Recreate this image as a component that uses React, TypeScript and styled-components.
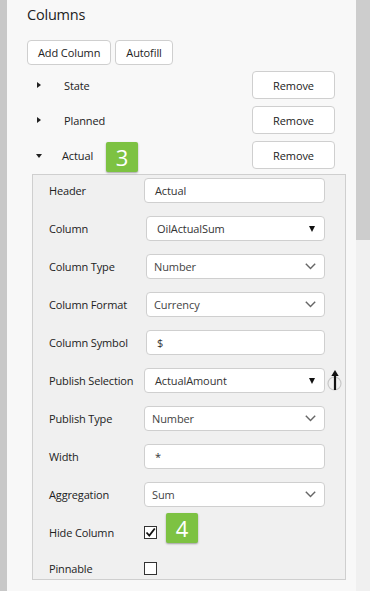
import React from "react";
import styled, { createGlobalStyle } from "styled-components";

const Global = createGlobalStyle`
  html, body { margin: 0; padding: 0; background: #f8f8f8; }
  * { box-sizing: border-box; }
  body { font-family: "Open Sans", "Noto Sans", sans-serif; color: #333; }
`;

const Page = styled.div`
  display: flex;
  width: 370px;
  height: 591px;
  overflow: hidden;
`;

const LeftStrip = styled.div`
  width: 7px;
  flex: none;
  background: #c8c8c8;
`;

const Main = styled.div`
  flex: 1;
  min-width: 0;
  background: #f8f8f8;
  padding: 5px 21px 0 20px;
  display: flex;
  flex-direction: column;
`;

const ScrollTrack = styled.div`
  width: 14px;
  flex: none;
  background: #f0f0f0;
  display: flex;
  flex-direction: column;
`;

const ScrollThumb = styled.div`
  height: 240px;
  background: #cdcdcd;
`;

const Title = styled.h2`
  margin: 0;
  font-size: 14.5px;
  font-weight: 400;
  line-height: 20px;
  color: #222;
  letter-spacing: -0.2px;
`;

const Toolbar = styled.div`
  display: flex;
  gap: 4px;
  margin-top: 15px;
`;

const Button = styled.button<{ $w?: number; $h?: number }>`
  font-family: inherit;
  font-size: 11px;
  letter-spacing: -0.1px;
  white-space: nowrap;
  color: #222;
  background: #fff;
  border: 1px solid #cfcfcf;
  border-radius: 4px;
  height: ${(p) => p.$h ?? 25}px;
  width: ${(p) => (p.$w ? `${p.$w}px` : "auto")};
  padding: 0 10px;
  cursor: pointer;
`;

const ColumnList = styled.div`
  display: flex;
  flex-direction: column;
  gap: 7px;
  margin-top: 6px;
`;

const ColumnRow = styled.div`
  position: relative;
  display: flex;
  align-items: center;
  height: 28px;
`;

const Caret = styled.span<{ $open?: boolean }>`
  width: 0;
  height: 0;
  margin-left: ${(p) => (p.$open ? 9 : 10)}px;
  border-style: solid;
  ${(p) =>
    p.$open
      ? `border-width: 4px 3.5px 0 3.5px; border-color: #222 transparent transparent transparent; margin-top: 1px;`
      : `border-width: 3.5px 0 3.5px 4px; border-color: transparent transparent transparent #222;`}
`;

const ColumnName = styled.span<{ $open?: boolean }>`
  margin-left: ${(p) => (p.$open ? 20 : 23)}px;
  font-size: 11px;
  letter-spacing: -0.1px;
  color: #222;
  flex: 1;
`;

const Badge = styled.div<{ $left: number; $top: number }>`
  position: absolute;
  left: ${(p) => p.$left}px;
  top: ${(p) => p.$top}px;
  width: 32px;
  height: 30px;
  background: #7dc242;
  color: #fff;
  font-size: 22px;
  line-height: 30px;
  text-align: center;
  border-radius: 2px;
  box-shadow: 0 1px 2px rgba(0, 0, 0, 0.35);
  z-index: 2;
`;

const Panel = styled.div`
  margin: 5px -11px 0 5px;
  background: #f0f0f0;
  border: 1px solid #cfcfcf;
  padding: 3px 20px 1px 16px;
  display: flex;
  flex-direction: column;
  gap: 13px;
`;

const FieldRow = styled.div<{ $h?: number }>`
  position: relative;
  display: grid;
  grid-template-columns: 95px 1fr;
  align-items: center;
  height: ${(p) => p.$h ?? 25}px;
`;

const Label = styled.span`
  font-size: 11px;
  letter-spacing: -0.15px;
  color: #222;
  white-space: nowrap;
`;

const Box = styled.div<{ $inset?: boolean; $pad?: number; $muted?: boolean }>`
  position: relative;
  display: flex;
  align-items: center;
  height: 25px;
  margin-left: ${(p) => (p.$inset ? 2 : 0)}px;
  padding: 0 9px 0 ${(p) => p.$pad ?? 9}px;
  background: #fff;
  border: 1px solid #cfcfcf;
  border-radius: 4px;
  font-size: 11px;
  letter-spacing: -0.1px;
  color: ${(p) => (p.$muted ? "#444" : "#333")};
`;

const BoxText = styled.span`
  flex: 1;
`;

const SolidArrow = styled.span`
  width: 0;
  height: 0;
  border-style: solid;
  border-width: 6px 3px 0 3px;
  border-color: #111 transparent transparent transparent;
`;

const Chevron = styled.svg`
  width: 11px;
  height: 7px;
  margin-right: -1px;
`;

const SideIcon = styled.svg`
  position: absolute;
  left: calc(100% + 3px);
  top: 0px;
  width: 16px;
  height: 23px;
`;

const Check = styled.span`
  width: 13px;
  height: 13px;
  border: 1px solid #333;
  background: #fff;
  display: flex;
  align-items: center;
  justify-content: center;
`;

const TextInput = ({ value, inset }: { value: string; inset?: boolean }) => (
  <Box $inset={inset} $pad={10}>
    <BoxText>{value}</BoxText>
  </Box>
);

const DropSelect = ({ value, inset, side }: { value: string; inset?: boolean; side?: boolean }) => (
  <Box $inset={inset} $pad={10}>
    <BoxText>{value}</BoxText>
    <SolidArrow />
    {side && (
      <SideIcon viewBox="0 0 16 23">
        <circle cx="7.5" cy="14.5" r="6.5" fill="none" stroke="#c8c8c8" strokeWidth="1.2" />
        <path d="M8 21 V5" stroke="#111" strokeWidth="2.2" />
        <path d="M4.3 7 L8 1 L11.7 7 Z" fill="#111" />
      </SideIcon>
    )}
  </Box>
);

const ChevSelect = ({ value, inset }: { value: string; inset?: boolean }) => (
  <Box $inset={inset} $pad={7} $muted>
    <BoxText>{value}</BoxText>
    <Chevron viewBox="0 0 11 7">
      <path d="M0.8 0.8 L5.5 5.6 L10.2 0.8" fill="none" stroke="#666" strokeWidth="1.4" />
    </Chevron>
  </Box>
);

const Checkbox = ({ checked }: { checked?: boolean }) => (
  <Check>
    {checked && (
      <svg width="11" height="11" viewBox="0 0 11 11">
        <path d="M1.5 5.5 L4.3 8.5 L9.8 1.5" fill="none" stroke="#111" strokeWidth="1.8" />
      </svg>
    )}
  </Check>
);

export default function App() {
  return (
    <>
      <Global />
      <Page>
        <LeftStrip />
        <Main>
          <Title>Columns</Title>
          <Toolbar>
            <Button>Add Column</Button>
            <Button>Autofill</Button>
          </Toolbar>
          <ColumnList>
            <ColumnRow>
              <Caret />
              <ColumnName>State</ColumnName>
              <Button $w={83} $h={28}>Remove</Button>
            </ColumnRow>
            <ColumnRow>
              <Caret />
              <ColumnName>Planned</ColumnName>
              <Button $w={83} $h={28}>Remove</Button>
            </ColumnRow>
            <ColumnRow>
              <Caret $open />
              <ColumnName $open>Actual</ColumnName>
              <Button $w={83} $h={28}>Remove</Button>
              <Badge $left={79} $top={1}>3</Badge>
            </ColumnRow>
          </ColumnList>
          <Panel>
            <FieldRow>
              <Label>Header</Label>
              <TextInput value="Actual" />
            </FieldRow>
            <FieldRow>
              <Label>Column</Label>
              <DropSelect value="OilActualSum" inset />
            </FieldRow>
            <FieldRow>
              <Label>Column Type</Label>
              <ChevSelect value="Number" inset />
            </FieldRow>
            <FieldRow>
              <Label>Column Format</Label>
              <ChevSelect value="Currency" inset />
            </FieldRow>
            <FieldRow>
              <Label>Column Symbol</Label>
              <TextInput value="$" inset />
            </FieldRow>
            <FieldRow>
              <Label>Publish Selection</Label>
              <DropSelect value="ActualAmount" side />
            </FieldRow>
            <FieldRow>
              <Label>Publish Type</Label>
              <ChevSelect value="Number" />
            </FieldRow>
            <FieldRow>
              <Label>Width</Label>
              <TextInput value="*" />
            </FieldRow>
            <FieldRow>
              <Label>Aggregation</Label>
              <ChevSelect value="Sum" />
            </FieldRow>
            <FieldRow>
              <Label>Hide Column</Label>
              <Checkbox checked />
              <Badge $left={117} $top={-7}>4</Badge>
            </FieldRow>
            <FieldRow $h={20}>
              <Label>Pinnable</Label>
              <Checkbox />
            </FieldRow>
          </Panel>
        </Main>
        <ScrollTrack>
          <ScrollThumb />
        </ScrollTrack>
      </Page>
    </>
  );
}
